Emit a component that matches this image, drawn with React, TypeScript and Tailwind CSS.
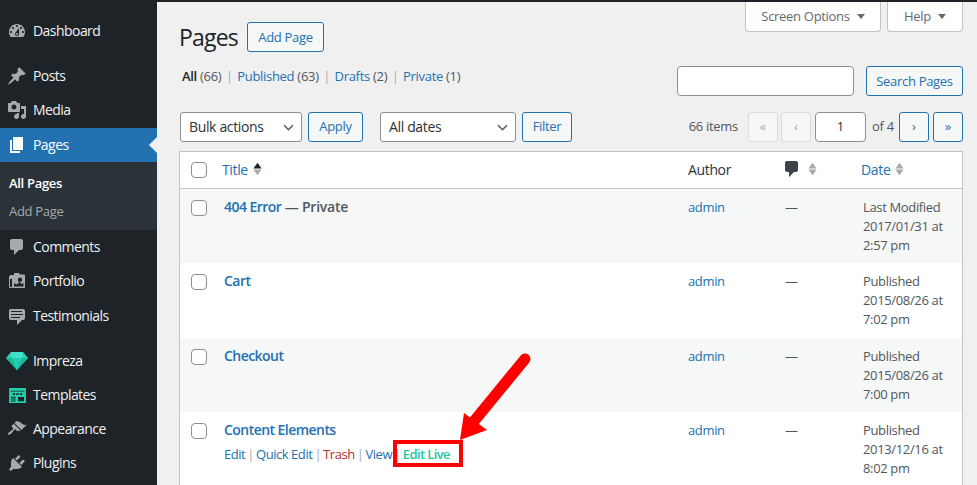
import type { ReactNode } from "react";

const icons: Record<string, string> = {
  dashboard:
    "M3.76 16h12.48c1.1-1.37 1.76-3.11 1.76-5 0-4.42-3.58-8-8-8s-8 3.58-8 8c0 1.89.66 3.63 1.76 5zM10 4c.55 0 1 .45 1 1s-.45 1-1 1-1-.45-1-1 .45-1 1-1zM6 6c.55 0 1 .45 1 1s-.45 1-1 1-1-.45-1-1 .45-1 1-1zm8 0c.55 0 1 .45 1 1s-.45 1-1 1-1-.45-1-1 .45-1 1-1zm-5.37 5.55L12 7v6c0 1.1-.9 2-2 2s-2-.9-2-2c0-.57.24-1.08.63-1.45zM4 10c.55 0 1 .45 1 1s-.45 1-1 1-1-.45-1-1 .45-1 1-1zm12 0c.55 0 1 .45 1 1s-.45 1-1 1-1-.45-1-1 .45-1 1-1zm-5 3c0-.55-.45-1-1-1s-1 .45-1 1 .45 1 1 1 1-.45 1-1z",
  post: "M10.44 3.02l1.82-1.82 6.36 6.35-1.83 1.82c-1.05-.68-2.48-.57-3.41.36l-.75.75c-.92.93-1.04 2.35-.35 3.41l-1.83 1.82-2.41-2.41-2.8 2.79c-.42.42-3.38 2.71-3.8 2.29s1.86-3.39 2.28-3.81l2.79-2.79L4.1 9.36l1.83-1.82c1.05.69 2.48.57 3.4-.36l.75-.75c.93-.92 1.05-2.35.36-3.41z",
  media:
    "M13 11V4c0-.55-.45-1-1-1h-1.67L9 1H5L3.67 3H2c-.55 0-1 .45-1 1v7c0 .55.45 1 1 1h10c.55 0 1-.45 1-1zM7 4.5c1.38 0 2.5 1.12 2.5 2.5S8.38 9.5 7 9.5 4.5 8.38 4.5 7 5.62 4.5 7 4.5zM14 6h5v10.5c0 1.38-1.12 2.5-2.5 2.5S14 17.88 14 16.5s1.12-2.5 2.5-2.5c.17 0 .34.02.5.05V9h-3V6zm-4 8.05V13h2v3.5c0 1.38-1.12 2.5-2.5 2.5S7 17.88 7 16.5 8.12 14 9.5 14c.17 0 .34.02.5.05z",
  page: "M6 15V2h10v13H6zm-1 1h8v2H3V5h2v11z",
  comment: "M5 2h9c1.1 0 2 .9 2 2v7c0 1.1-.9 2-2 2h-2l-5 5v-5H5c-1.1 0-2-.9-2-2V4c0-1.1.9-2 2-2z",
  portfolio:
    "M7 2h5l1 1.5h4a1 1 0 0 1 1 1V16a1 1 0 0 1-1 1H6a1 1 0 0 1-1-1V8H3V4h4V2zm6 4.5a2.2 2.2 0 1 0 0 4.4 2.2 2.2 0 0 0 0-4.4zM7 12v3.5h9.5V12l-2 1-2-2-3 2.5L7 12zM2 5h1v11h2v1H3a1 1 0 0 1-1-1V5z",
  testimonial:
    "M4 3h12c.55 0 1.02.2 1.41.59S18 4.45 18 5v7c0 .55-.2 1.02-.59 1.41S16.55 14 16 14h-1l-5 5v-5H4c-.55 0-1.02-.2-1.41-.59S2 12.55 2 12V5c0-.55.2-1.02.59-1.41S3.45 3 4 3zm11 2H4v1h11V5zm1 3H4v1h12V8zm-3 3H4v1h9v-1z",
  brush:
    "M14.48 11.06L7.41 3.99l1.5-1.5c.5-.56 2.3-.47 3.51.32 1.21.8 1.43 1.28 2.91 2.1 1.18.64 2.45 1.26 4.45.85zm-.71.71L6.7 4.7 4.93 6.47c-.39.39-.39 1.02 0 1.41l1.06 1.06c.39.39.39 1.03 0 1.42-.6.6-1.43 1.11-2.21 1.69-.35.26-.7.53-1.01.84C1.43 13.23.4 14.84 1.1 15.54c.71.7 2.31-.32 3.645-1.66.31-.31.58-.66.84-1.01.58-.78 1.09-1.61 1.69-2.21.39-.39 1.02-.39 1.41 0l1.06 1.06c.39.39 1.02.39 1.41 0z",
  plugin:
    "M13.11 4.36L9.87 7.6 8 5.73l3.24-3.24c.35-.34 1.05-.2 1.56.32.52.51.66 1.21.31 1.55zm-8 1.77l.91-1.12 9.01 9.01-1.19.84c-.71.71-2.63 1.16-3.82 1.16H6.14L4.9 17.26c-.59.59-1.54.59-2.12 0-.59-.58-.59-1.53 0-2.12l1.24-1.24v-3.88c0-1.13.4-3.19 1.09-3.89zm7.26 3.97l3.24-3.24c.34-.35 1.04-.21 1.55.31.52.51.66 1.21.31 1.55l-3.24 3.25z",
};

const Icon = ({ name, className }: { name: string; className?: string }) => (
  <svg viewBox="0 0 20 20" className={className} fill="currentColor" fillRule="evenodd">
    <path d={icons[name]} />
  </svg>
);

const Gem = () => (
  <svg viewBox="0 0 22 20" className="w-[22px] h-[20px]">
    <path d="M5 1h12l5 6-11 12L0 7z" fill="#2ad4b4" />
    <path d="M0 7h22L11 19z" fill="#17b89a" />
    <path d="M6 7h10l-5 12z" fill="#23cdb0" />
    <path d="M5 1h12l-1 6H6z" fill="#3fe0c4" />
  </svg>
);

const TemplatesIcon = () => (
  <svg viewBox="0 0 18 16" className="w-[17px] h-[15px]">
    <path
      fillRule="evenodd"
      fill="#23d0ae"
      d="M0 0h18v16H0zM1.500 3v.8h15V3zM4 5.500v2h2.500v-2zm3.800 0v2h2.500v-2zm3.800 0v2h2.500v-2zM2 9.300v1h5v-1zm0 2v1h5v-1zm0 2v1h5v-1zM9.500 9.500v4.500H16V9.500z"
    />
  </svg>
);

const MenuItem = ({ icon, label, active }: { icon: ReactNode; label: string; active?: boolean }) => (
  <div
    className={`relative flex items-center h-[34px] ${active ? "bg-[#2271b1] text-white" : "text-[#f0f0f1]"}`}
  >
    <span className={`flex w-[33px] justify-center pl-[1px] ${active ? "text-white" : "text-[#a7aaad]"}`}>{icon}</span>
    <span className="text-[14px] tracking-[-0.55px] pb-[1px]">{label}</span>
    {active && (
      <span className="absolute right-0 top-[9px] border-y-[8px] border-r-[8px] border-y-transparent border-r-[#f0f0f1]" />
    )}
  </div>
);

const Sidebar = () => {
  const i = "w-[20px] h-[20px]";
  return (
    <aside className="w-[157px] shrink-0 bg-[#1d2327] pt-[14px]">
      <MenuItem icon={<Icon name="dashboard" className={i} />} label="Dashboard" />
      <div className="h-[11px]" />
      <MenuItem icon={<Icon name="post" className={i} />} label="Posts" />
      <MenuItem icon={<Icon name="media" className={i} />} label="Media" />
      <div className="h-[1px]" />
      <MenuItem icon={<Icon name="page" className={i} />} label="Pages" active />
      <div className="bg-[#2c3338] h-[68px] pt-[7px] pl-[9px] text-[13px] tracking-[-0.3px] leading-[28px]">
        <div className="font-semibold text-white">All Pages</div>
        <div className="text-[#a7aaad]">Add Page</div>
      </div>
      <MenuItem icon={<Icon name="comment" className={i} />} label="Comments" />
      <MenuItem icon={<Icon name="portfolio" className={i} />} label="Portfolio" />
      <div className="h-[1px]" />
      <MenuItem icon={<Icon name="testimonial" className={i} />} label="Testimonials" />
      <div className="h-[11px]" />
      <MenuItem icon={<Gem />} label="Impreza" />
      <MenuItem icon={<TemplatesIcon />} label="Templates" />
      <MenuItem icon={<Icon name="brush" className={i} />} label="Appearance" />
      <MenuItem icon={<Icon name="plugin" className={i} />} label="Plugins" />
    </aside>
  );
};

const Btn = ({ children, className = "" }: { children: ReactNode; className?: string }) => (
  <div
    className={`flex items-center justify-center h-[30px] rounded-[3px] border border-[#2271b1] bg-[#f6f7f7] text-[#2271b1] text-[13px] tracking-[-0.3px] ${className}`}
  >
    {children}
  </div>
);

const Select = ({ label, className = "" }: { label: string; className?: string }) => (
  <div
    className={`flex items-center justify-between h-[30px] pb-[2px] rounded-[3px] border border-[#8c8f94] bg-white pl-[8px] pr-[7px] text-[14px] tracking-[-0.35px] text-[#2c3338] ${className}`}
  >
    {label}
    <svg viewBox="0 0 12 8" className="w-[11px] h-[7px] mt-[2px]" fill="none" stroke="#50575e" strokeWidth="1.7">
      <path d="M1 1.500l5 5 5-5" />
    </svg>
  </div>
);

const PageBtn = ({ label, off, className = "" }: { label: string; off?: boolean; className?: string }) => (
  <div
    className={`flex items-center justify-center w-[30px] h-[30px] rounded-[3px] border text-[13px] ${off ? "border-[#dcdcde] bg-[#f6f7f7] text-[#a7aaad]" : "border-[#2271b1] bg-[#f6f7f7] text-[#2271b1]"} ${className}`}
  >
    {label}
  </div>
);

const Sort = ({ up = "#a7aaad" }: { up?: string }) => (
  <svg viewBox="0 0 10 16" className="w-[9px] h-[16px]">
    <path d="M5 1l4.500 6.500h-9z" fill={up} />
    <path d="M5 15L.5 8.500h9z" fill="#a7aaad" />
  </svg>
);

const Checkbox = () => (
  <span className="block w-[16px] h-[16px] rounded-[4px] border border-[#8c8f94] bg-white" />
);

const rows = [
  { title: "404 Error", state: " — Private", status: "Last Modified", day: "2017/01/31 at", time: "2:57 pm", h: "h-[74px]", bg: "bg-[#f6f7f7]" },
  { title: "Cart", status: "Published", day: "2015/08/26 at", time: "7:02 pm", h: "h-[75px]", bg: "bg-white" },
  { title: "Checkout", status: "Published", day: "2015/08/26 at", time: "7:00 pm", h: "h-[74px]", bg: "bg-[#f6f7f7]" },
  { title: "Content Elements", status: "Published", day: "2013/12/16 at", time: "8:02 pm", h: "h-[75px]", bg: "bg-white", actions: true },
];

const gridCols = "grid grid-cols-[44px_464px_97px_78px_1fr]";

const PagesTable = () => (
  <div className="mt-[9px] border border-[#c3c4c7] bg-white text-[13px] tracking-[-0.35px]">
    <div className={`${gridCols} h-[37px] items-center border-b border-[#c3c4c7] text-[14px] tracking-[-0.35px]`}>
      <div className="pl-[11px]">
        <Checkbox />
      </div>
      <div className="flex items-center gap-[5px] pb-[2px] text-[#2271b1] -ml-[2px]">
        Title <Sort up="#1d2327" />
      </div>
      <div className="text-[#2c3338] pb-[2px]">Author</div>
      <div className="flex items-center gap-[6px] -ml-[3px] pb-[2px] text-[#3c434a]">
        <Icon name="comment" className="w-[20px] h-[20px]" />
        <Sort />
      </div>
      <div className="flex items-center gap-[5px] pb-[2px] text-[#2271b1] -ml-[2px]">
        Date <Sort />
      </div>
    </div>
    {rows.map((row) => (
      <div key={row.title} className={`${gridCols} ${row.h} ${row.bg} overflow-hidden pt-[9px] leading-[19px] text-[#50575e]`}>
        <div className="pl-[11px] pt-[2px]">
          <Checkbox />
        </div>
        <div>
          <div className="text-[14px] font-semibold tracking-[-0.55px] -mt-[1px]">
            <span className="text-[#2271b1]">{row.title}</span>
            <span className="tracking-[-0.2px]">{row.state}</span>
          </div>
          {row.actions && (
            <div className="mt-[6px] flex gap-[2px] tracking-[-0.45px] text-[#a7aaad]">
              <span className="text-[#2271b1]">Edit</span>|<span className="text-[#2271b1]">Quick Edit</span>|
              <span className="text-[#b32d2e]">Trash</span>|<span className="text-[#2271b1]">View</span>|
              <span className="text-[#1cc7a3] font-semibold tracking-[-0.6px]">Edit Live</span>
            </div>
          )}
        </div>
        <div className="text-[#2271b1]">admin</div>
        <div>—</div>
        <div>
          <div>{row.status}</div>
          <div>{row.day}</div>
          <div>{row.time}</div>
        </div>
      </div>
    ))}
  </div>
);

export default function App() {
  return (
    <div className="relative flex w-[977px] h-[485px] overflow-hidden bg-[#f0f0f1] font-['Open_Sans',sans-serif]">
      <Sidebar />
      <main className="flex-1 flex flex-col">
        <div className="h-[2px] bg-[#1d2327] shrink-0" />
        <div className="pl-[22px] pr-[14px]">
          <div className="flex items-start">
            <div className="flex items-center pt-[20px]">
              <h1 className="text-[23px] tracking-[-0.8px] text-[#1d2327] leading-[30px]">Pages</h1>
              <Btn className="ml-[9px] w-[77px] pt-[2px]">Add Page</Btn>
            </div>
            <div className="ml-auto flex gap-[6px]">
              <div className="flex items-center justify-center gap-[7px] w-[136px] h-[30px] bg-white border border-t-0 border-[#c3c4c7] rounded-b-[4px] text-[13px] tracking-[-0.3px] text-[#646970]">
                Screen Options
                <span className="border-x-[4px] border-t-[5px] border-x-transparent border-t-[#646970]" />
              </div>
              <div className="flex items-center justify-center gap-[7px] w-[76px] h-[30px] bg-white border border-t-0 border-[#c3c4c7] rounded-b-[4px] text-[13px] tracking-[-0.3px] text-[#646970]">
                Help
                <span className="border-x-[4px] border-t-[5px] border-x-transparent border-t-[#646970]" />
              </div>
            </div>
          </div>

          <div className="mt-[14px] flex items-center h-[30px] text-[13px] tracking-[-0.3px] text-[#50575e]">
            <div className="flex gap-[4.5px] pl-[3px] -mt-[8px]">
              <span>
                <span className="font-semibold text-[#1d2327]">All</span> (66)
              </span>
              <span className="text-[#a7aaad]">|</span>
              <span>
                <span className="text-[#2271b1]">Published</span> (63)
              </span>
              <span className="text-[#a7aaad]">|</span>
              <span>
                <span className="text-[#2271b1]">Drafts</span> (2)
              </span>
              <span className="text-[#a7aaad]">|</span>
              <span>
                <span className="text-[#2271b1]">Private</span> (1)
              </span>
            </div>
            <input className="ml-auto w-[177px] h-[30px] rounded-[4px] border border-[#8c8f94] bg-white" />
            <Btn className="ml-[12px] w-[97px] pt-[2px]">Search Pages</Btn>
          </div>

          <div className="mt-[16px] flex items-center pl-[1px]">
            <Select label="Bulk actions" className="w-[122px]" />
            <Btn className="ml-[6px] w-[55px]">Apply</Btn>
            <Select label="All dates" className="ml-[17px] w-[136px]" />
            <Btn className="ml-[6px] w-[50px]">Filter</Btn>
            <span className="ml-auto text-[13px] tracking-[-0.3px] text-[#50575e]">66 items</span>
            <PageBtn label="«" off className="ml-[10px]" />
            <PageBtn label="‹" off className="ml-[3px]" />
            <div className="ml-[4px] flex items-center justify-center w-[51px] h-[30px] rounded-[4px] border border-[#8c8f94] bg-white text-[13px] text-[#2c3338]">
              1
            </div>
            <span className="w-[33px] pl-[6px] text-[13px] tracking-[-0.3px] text-[#50575e]">of 4</span>
            <PageBtn label="›" />
            <PageBtn label="»" className="ml-[4px]" />
          </div>

          <PagesTable />
        </div>
      </main>

      {/* callout over the Edit Live link */}
      <div className="absolute left-[393px] top-[440px] w-[70px] h-[27px] border-[4px] border-[#ff0000]" />
      <svg className="absolute left-[455px] top-[350px]" width="80" height="95" viewBox="0 0 80 95">
        <path d="M70 9L20 70" stroke="#ff0000" strokeWidth="11" strokeLinecap="round" fill="none" />
        <path d="M5 90L9 63 32 80z" fill="#ff0000" />
      </svg>
    </div>
  );
}
